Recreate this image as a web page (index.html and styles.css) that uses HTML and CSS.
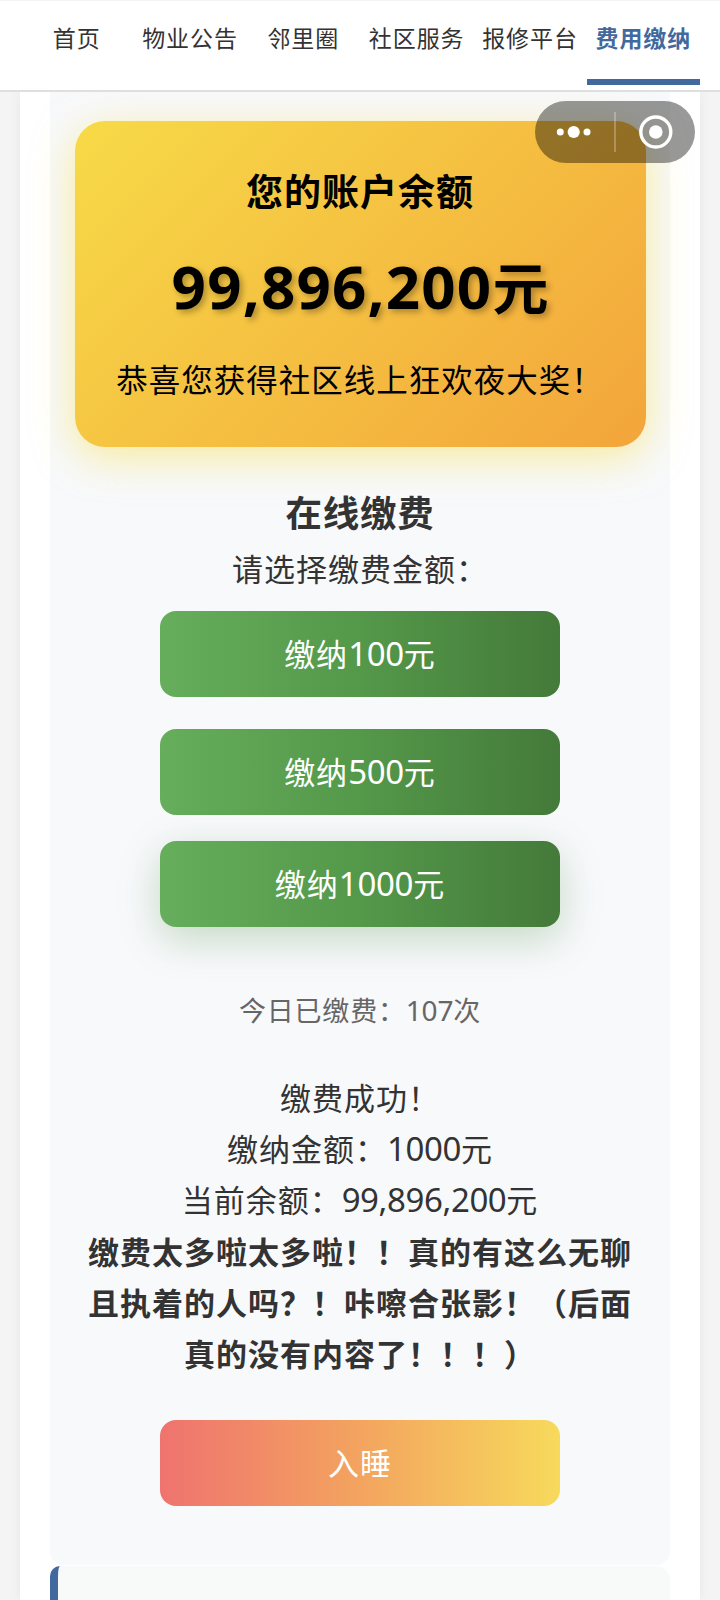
FILE: index.html
```html
<!DOCTYPE html>
<html lang="zh-CN">
<head>
<meta charset="utf-8">
<title>费用缴纳</title>
<link rel="stylesheet" href="styles.css">
</head>
<body>
<nav class="tabs">
  <a class="tab">首页</a>
  <a class="tab">物业公告</a>
  <a class="tab">邻里圈</a>
  <a class="tab">社区服务</a>
  <a class="tab">报修平台</a>
  <a class="tab active">费用缴纳</a>
</nav>
<div class="capsule">
  <svg width="160" height="62" viewBox="0 0 160 62">
    <g fill="#fff">
      <circle cx="25.3" cy="31" r="3.5"/>
      <circle cx="38.7" cy="31" r="6.1"/>
      <circle cx="52" cy="31" r="3.5"/>
      <circle cx="120.8" cy="31" r="6.8"/>
    </g>
    <circle cx="120.8" cy="31" r="15" fill="none" stroke="#fff" stroke-width="3.4"/>
    <rect x="79" y="11" width="2" height="40" fill="#fff" fill-opacity=".25"/>
  </svg>
</div>
<main class="page">
  <section class="panel">
    <div class="balance">
      <h2 class="balance-title">您的账户余额</h2>
      <div class="amount"><span class="num">99,896,200</span>元</div>
      <p class="congrats">恭喜您获得社区线上狂欢夜大奖！</p>
    </div>
    <h3 class="heading">在线缴费</h3>
    <p class="hint">请选择缴费金额：</p>
    <div class="buttons">
      <button class="btn pay">缴纳<span class="num">100</span>元</button>
      <button class="btn pay">缴纳<span class="num">500</span>元</button>
      <button class="btn pay raised">缴纳<span class="num">1000</span>元</button>
    </div>
    <p class="count">今日已缴费：<span class="num">107</span>次</p>
    <div class="result">
      缴费成功！<br>
      缴纳金额：<span class="num">1000</span>元<br>
      当前余额：<span class="num">99,896,200</span>元<br>
      <strong>缴费太多啦太多啦！！真的有这么无聊<br>且执着的人吗？！咔嚓合张影！（后面<br>真的没有内容了！！！）</strong>
    </div>
    <button class="btn sleep">入睡</button>
  </section>
  <section class="next"></section>
</main>
</body>
</html>
```
FILE: styles.css
```css
* { box-sizing: border-box; margin: 0; padding: 0; }
body {
  height: 1600px;
  overflow: hidden;
  background: #f4f4f4;
  color: #333;
  font-family: "Noto Sans CJK SC", sans-serif;
  text-spacing-trim: space-all;
  text-align: center;
}
.num { font-family: "Noto Sans", sans-serif; }
.tabs {
  position: relative;
  z-index: 2;
  display: grid;
  grid-template-columns: repeat(6, 1fr);
  height: 92px;
  padding: 0 20px;
  background: #fff;
  border-top: 1px solid #f4f4f4;
  border-bottom: 2px solid #dfdfdf;
}
.tab {
  height: 84px;
  padding-top: 16px;
  font-size: 23px;
  line-height: 41px;
  letter-spacing: .9px;
  white-space: nowrap;
}
.active {
  color: #42699d;
  font-weight: 700;
  border-bottom: 6px solid #42699d;
}
.capsule {
  position: absolute;
  z-index: 3;
  top: 101px;
  left: 535px;
  width: 160px;
  height: 62px;
  border-radius: 31px;
  background: rgba(0, 0, 0, .4);
}
.capsule svg { display: block; }
.page {
  width: 680px;
  height: 1508px;
  margin: 0 auto;
  padding: 0 30px;
  background: #fff;
  box-shadow: 0 0 12px rgba(0, 0, 0, .06);
}
.panel {
  height: 1473px;
  padding: 29px 24.5px 0;
  background: #f8f9fb;
  border-radius: 0 0 14px 14px;
}
.balance {
  height: 326px;
  padding-top: 38px;
  border-radius: 30px;
  background: linear-gradient(135deg, #f7da47, #f3a53b);
  box-shadow: 0 10px 40px rgba(248, 222, 60, .5);
  color: #000;
}
.balance-title { font-size: 37px; line-height: 62px; letter-spacing: 1px; }
.amount {
  height: 104px;
  margin-top: 12px;
  font-size: 56px;
  font-weight: 700;
  line-height: 104px;
  text-shadow: 3px 3px 6px rgba(0, 0, 0, .3);
}
.amount .num { font-size: 60px; line-height: 1; letter-spacing: 1.2px; }
.congrats {
  margin-top: 16px;
  font-size: 31.5px;
  line-height: 50px;
  letter-spacing: 1px;
}
.heading { margin-top: 40px; font-size: 36.5px; line-height: 50px; letter-spacing: .8px; }
.hint { margin-top: 6px; font-size: 31px; line-height: 50px; letter-spacing: 1px; }
.buttons { margin-top: 18px; }
.btn {
  display: block;
  width: 400px;
  height: 86px;
  margin: 0 auto;
  padding-bottom: 3px;
  border: 0;
  border-radius: 16px;
  color: #fff;
  font-family: inherit;
  font-size: 31px;
  line-height: 82px;
  letter-spacing: 1px;
}
.btn .num { font-size: 33px; line-height: 1; letter-spacing: -.3px; }
.pay { background: linear-gradient(90deg, #66ae5b, #54984a 50%, #447a3a); }
.pay + .pay { margin-top: 32px; }
.pay + .raised {
  margin-top: 26px;
  box-shadow: 0 12px 40px rgba(76, 140, 70, .3);
}
.count {
  margin-top: 60px;
  color: #666;
  font-size: 27px;
  line-height: 46px;
  letter-spacing: .8px;
}
.count .num { font-size: 28px; line-height: 1; letter-spacing: -.2px; }
.result {
  margin: 38px -10px 0;
  font-size: 31px;
  line-height: 51.2px;
  letter-spacing: 1px;
}
.result .num { font-size: 33px; line-height: 1; letter-spacing: -.4px; }
.sleep {
  margin-top: 42px;
  background: linear-gradient(90deg, #ef736f, #f3a45f 50%, #f7da5c);
}
.next {
  height: 60px;
  margin-top: 1px;
  background: #f8f9f9;
  border-left: 8px solid #42699d;
  border-radius: 10px 14px 0 0;
}
```
